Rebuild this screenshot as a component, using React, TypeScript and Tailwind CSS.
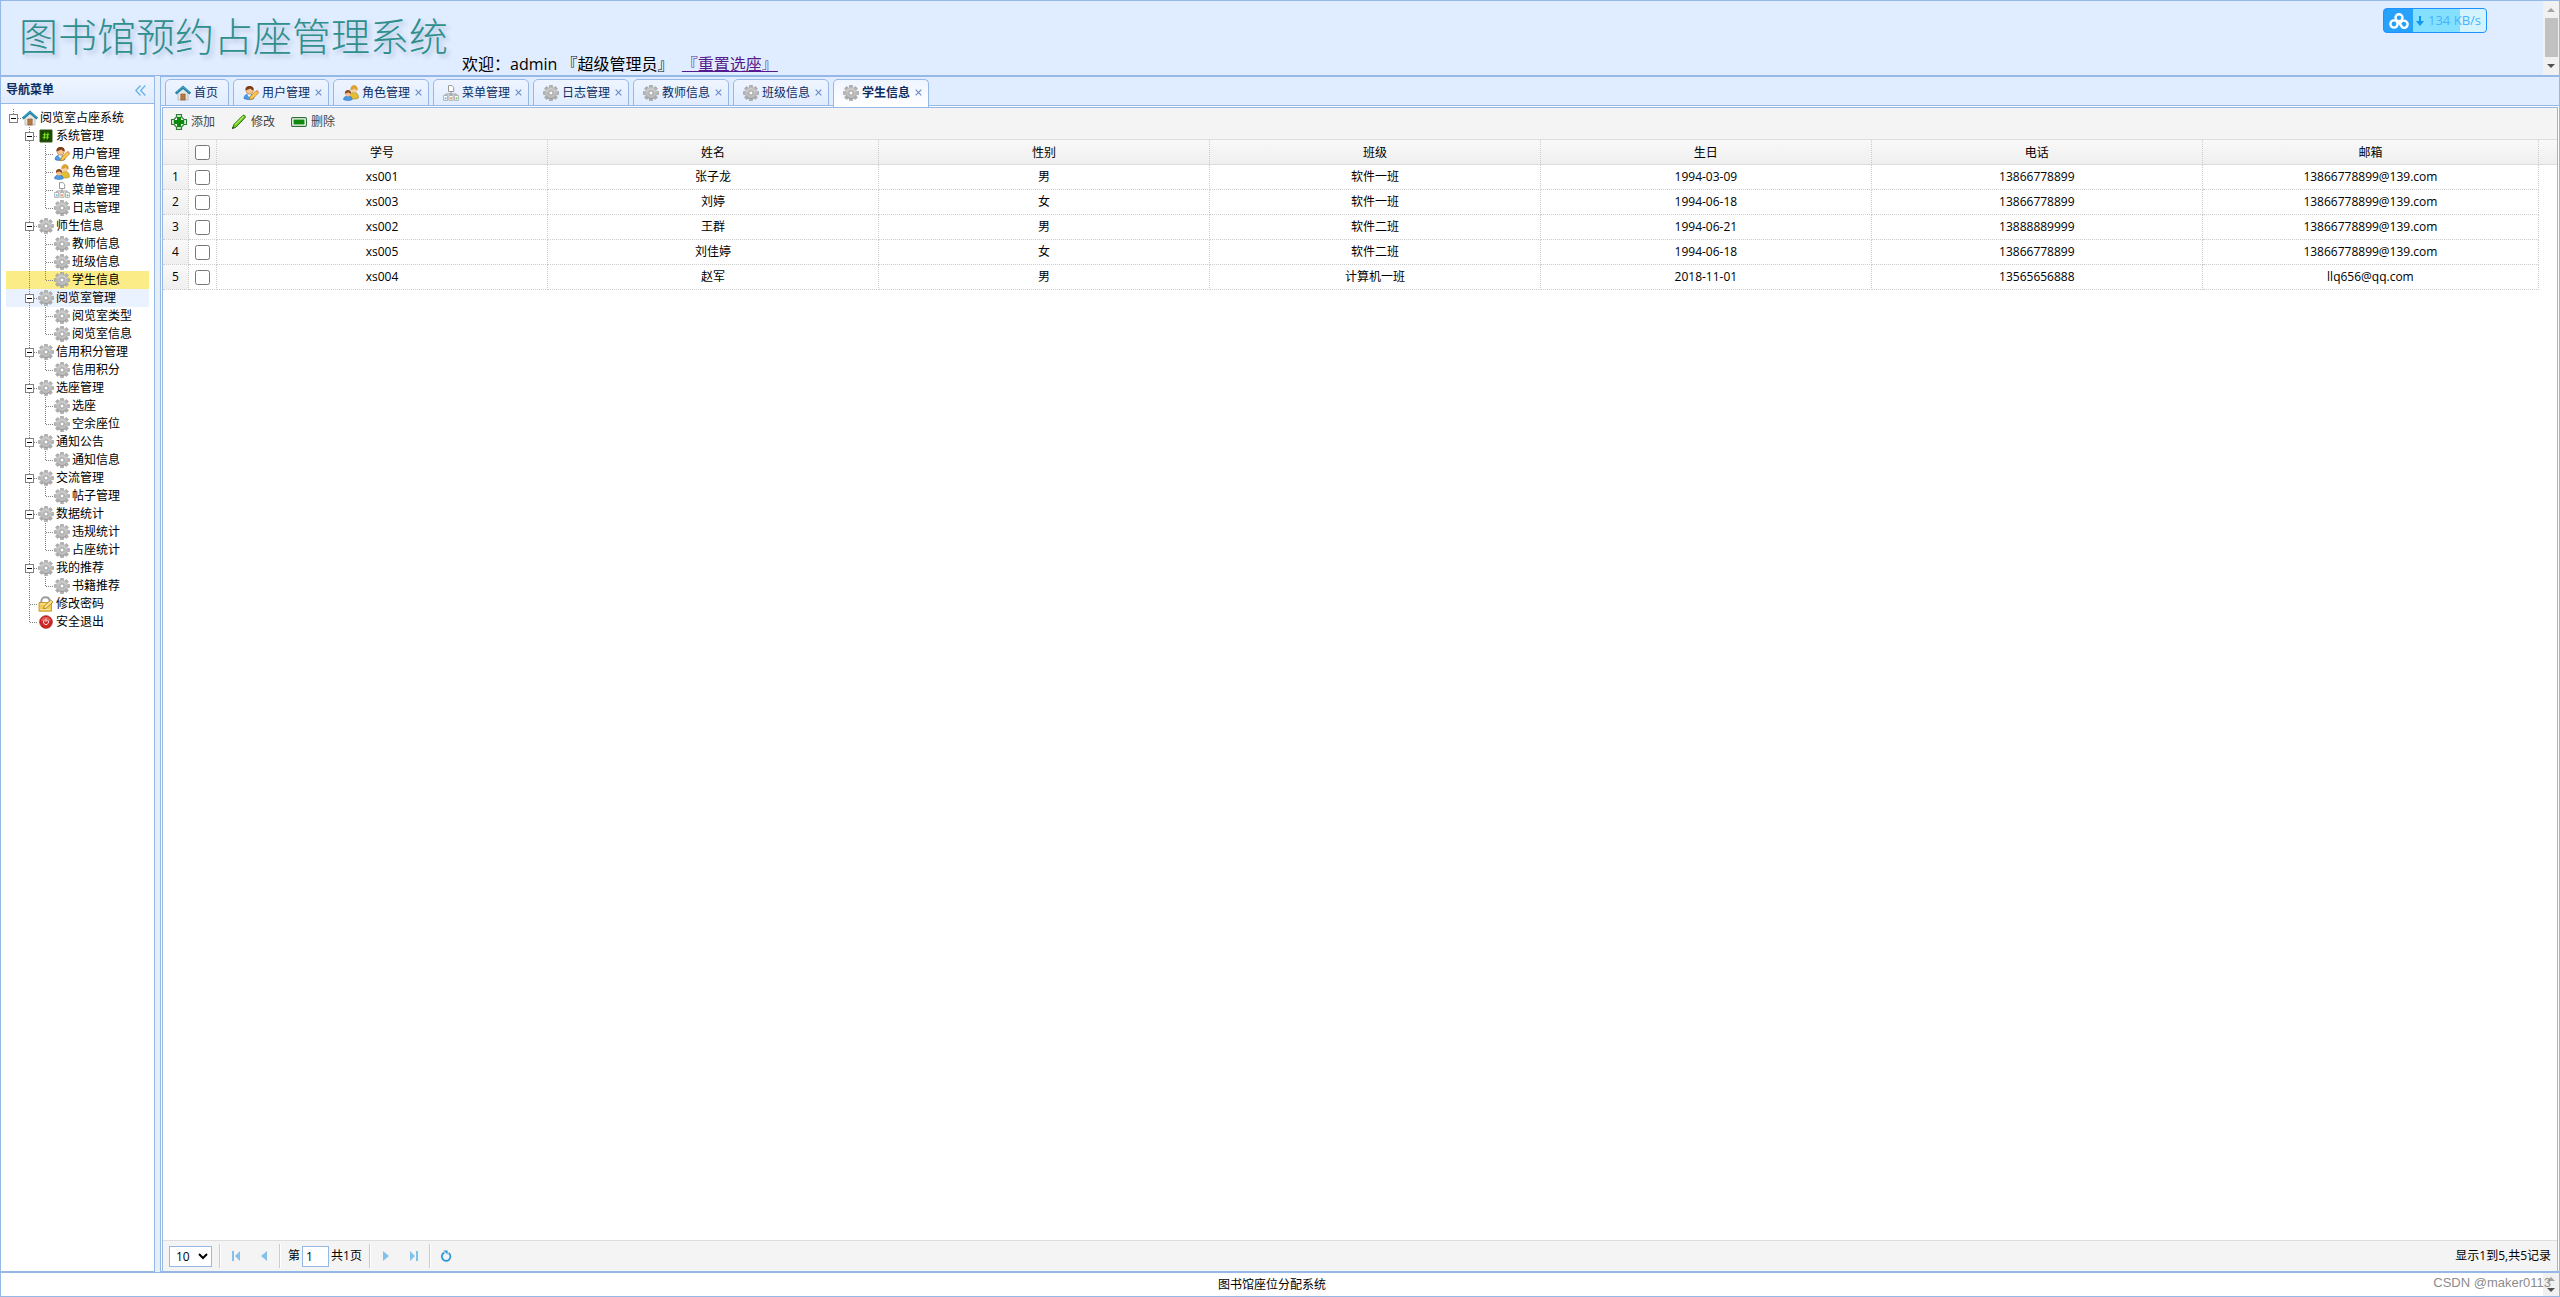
import type { ReactNode } from 'react';

type IconName = 'home' | 'sys' | 'user' | 'role' | 'menu' | 'gear' | 'lock' | 'power';
type CellKind = 'root' | 'minus' | 'line' | 'join' | 'joinBottom';

interface TreeRow {
  label: string;
  icon: IconName;
  cells: CellKind[];
  state?: 'selected' | 'hover';
}

interface Group {
  label: string;
  icon: IconName;
  children?: { label: string; icon?: IconName }[];
}

const GROUPS: Group[] = [
  {
    label: '系统管理',
    icon: 'sys',
    children: [
      { label: '用户管理', icon: 'user' },
      { label: '角色管理', icon: 'role' },
      { label: '菜单管理', icon: 'menu' },
      { label: '日志管理' },
    ],
  },
  { label: '师生信息', icon: 'gear', children: [{ label: '教师信息' }, { label: '班级信息' }, { label: '学生信息' }] },
  { label: '阅览室管理', icon: 'gear', children: [{ label: '阅览室类型' }, { label: '阅览室信息' }] },
  { label: '信用积分管理', icon: 'gear', children: [{ label: '信用积分' }] },
  { label: '选座管理', icon: 'gear', children: [{ label: '选座' }, { label: '空余座位' }] },
  { label: '通知公告', icon: 'gear', children: [{ label: '通知信息' }] },
  { label: '交流管理', icon: 'gear', children: [{ label: '帖子管理' }] },
  { label: '数据统计', icon: 'gear', children: [{ label: '违规统计' }, { label: '占座统计' }] },
  { label: '我的推荐', icon: 'gear', children: [{ label: '书籍推荐' }] },
  { label: '修改密码', icon: 'lock' },
  { label: '安全退出', icon: 'power' },
];

const TABS: { label: string; icon: IconName }[] = [
  { label: '首页', icon: 'home' },
  { label: '用户管理', icon: 'user' },
  { label: '角色管理', icon: 'role' },
  { label: '菜单管理', icon: 'menu' },
  { label: '日志管理', icon: 'gear' },
  { label: '教师信息', icon: 'gear' },
  { label: '班级信息', icon: 'gear' },
  { label: '学生信息', icon: 'gear' },
];

const ACTIVE = '学生信息';
const HOVERED = '阅览室管理';

const COLUMNS = ['学号', '姓名', '性别', '班级', '生日', '电话', '邮箱'];

const STUDENTS = [
  ['xs001', '张子龙', '男', '软件一班', '1994-03-09', '13866778899', '13866778899@139.com'],
  ['xs003', '刘婷', '女', '软件一班', '1994-06-18', '13866778899', '13866778899@139.com'],
  ['xs002', '王群', '男', '软件二班', '1994-06-21', '13888889999', '13866778899@139.com'],
  ['xs005', '刘佳婷', '女', '软件二班', '1994-06-18', '13866778899', '13866778899@139.com'],
  ['xs004', '赵军', '男', '计算机一班', '2018-11-01', '13565656888', 'llq656@qq.com'],
];

function buildRows(): TreeRow[] {
  const rows: TreeRow[] = [{ label: '阅览室占座系统', icon: 'home', cells: ['root'] }];
  GROUPS.forEach((group, i) => {
    const leaf: CellKind = i === GROUPS.length - 1 ? 'joinBottom' : 'join';
    rows.push({
      label: group.label,
      icon: group.icon,
      cells: ['line', group.children ? 'minus' : leaf],
      state: group.label === HOVERED ? 'hover' : undefined,
    });
    group.children?.forEach((child, j, all) => {
      rows.push({
        label: child.label,
        icon: child.icon ?? 'gear',
        cells: ['line', 'line', j === all.length - 1 ? 'joinBottom' : 'join'],
        state: child.label === ACTIVE ? 'selected' : undefined,
      });
    });
  });
  return rows;
}

const TREE_ROWS = buildRows();

const TOOTH_ANGLES = [0, 45, 90, 135, 180, 225, 270, 315];

const ICONS: Record<IconName, ReactNode> = {
  home: (
    <>
      <path d="M3 7.5 8 3.5l5 4V15H3z" fill="#e6e6e4" stroke="#b5b5b2" strokeWidth=".8" />
      <path d="M5.8 9h4.4v6H5.8z" fill="#b57a45" stroke="#8e5828" strokeWidth=".6" />
      <path d="M.7 8.6 8 2.3l7.3 6.3" fill="none" stroke="#1b7ea3" strokeWidth="2.6" />
      <path d="M1.4 7.4 8 1.9l6.6 5.5" fill="none" stroke="#4fb3d4" strokeWidth=".9" />
    </>
  ),
  sys: (
    <>
      <path d="M2 2h12v12H2z" fill="#1c4405" stroke="#2b5a0c" />
      <path d="M6.9 4.5 6 11.5M10 4.5l-.9 7M4.8 6.7h6.6M4.5 9.3h6.6" stroke="#7ae812" strokeWidth="1.1" fill="none" />
    </>
  ),
  user: (
    <>
      <path d="M1 13.5C.8 10.8 3 9 6 9s5 1.6 5 4.5c-1.500 1.300-8.500 1.300-10 0z" fill="#4d9be6" stroke="#2a6cb0" strokeWidth=".6" />
      <path d="m4.200 9.200 2 3 2.200-3z" fill="#fff" />
      <circle cx="6.600" cy="5.400" r="3.600" fill="#f7c48d" stroke="#a9672d" strokeWidth=".5" />
      <path d="M2.600 5.600C1.800 2.600 4 .7 6.800.9c3 .1 4.500 2.100 3.700 4.500C8.600 5.100 8 4 7.200 3.500 6 4.600 4.200 4.300 2.600 5.600z" fill="#7c3d14" />
      <path d="m6.500 14.800.6-3L13 5.700l2.500 2.200-6 6.200z" fill="#f9c64a" stroke="#bd7c15" strokeWidth=".7" />
      <path d="m13 5.700 1-.9 2 2-.6 1z" fill="#ec8f80" />
    </>
  ),
  role: (
    <>
      <path d="M6.500 12.500C6.500 9.500 8 7.500 11 7.500s4.600 2 4.400 5.500c-2 1.500-6 1.500-8.900-.5z" fill="#e3bf32" stroke="#a98512" strokeWidth=".6" />
      <circle cx="11" cy="4.500" r="3" fill="#f8cd9b" />
      <path d="M7.700 5C7.400 2 9 .5 11 .5s3.800 1.500 3.300 4.500C12.800 4.600 12.200 3.700 11.500 3c-1 1-2.500 1-3.800 2z" fill="#e2a52b" stroke="#b57d14" strokeWidth=".4" />
      <path d="M.6 14.600C.5 12.300 2.200 11 4.900 11s4.400 1.300 4.300 3.600c-2 1.200-6.600 1.200-8.600 0z" fill="#4d9be6" stroke="#2a6cb0" strokeWidth=".6" />
      <circle cx="5" cy="8.600" r="2.900" fill="#f5bf8b" />
      <path d="M1.900 8.800C1.600 6.400 3 5 5 5s3.500 1.400 3.100 3.800C6.500 8.400 6 7.700 5.300 7.200c-.9.9-2.200.8-3.400 1.600z" fill="#8b4a1d" />
    </>
  ),
  menu: (
    <>
      <path d="M8 6v3M2.800 11V9h10.400v2M8 9v2" fill="none" stroke="#8f8f8f" strokeWidth=".9" />
      <path d="M5.500.6h3.400l1.800 1.700v4.200H5.500z" fill="#fff" stroke="#8f8f8f" strokeWidth=".9" />
      <path d="M.6 10.400h4v5h-4zM6 10.400h4v5H6zM11.400 10.400h4v5h-4z" fill="#fff" stroke="#a0a0a0" strokeWidth=".8" />
      <path d="M1.800 12.300h1.700v2H1.800z" fill="#6fb3ea" />
      <path d="M7.200 12.300h1.700v2H7.200z" fill="#f0874a" />
      <path d="M12.600 12.300h1.700v2h-1.700z" fill="#63c568" />
    </>
  ),
  gear: (
    <>
      {TOOTH_ANGLES.map((a) => (
        <rect key={a} x="6.400" y=".3" width="3.200" height="4" rx=".6" fill="#b4b4b4" stroke="#8b8b8b" strokeWidth=".5" transform={`rotate(${a} 8 8)`} />
      ))}
      <circle cx="8" cy="8" r="5.700" fill="#bdbdbd" />
      <path d="M3.600 7a4.600 4.600 0 0 1 8.800 0" fill="none" stroke="#d6d6d6" strokeWidth="1" />
      <path d="M3 10.600a5.600 5.600 0 0 0 10 0" fill="none" stroke="#8f8f8f" strokeWidth=".7" />
      <circle cx="8" cy="8" r="2" fill="#fff" stroke="#979797" strokeWidth=".8" />
    </>
  ),
  lock: (
    <>
      <path d="M3.300 8V5.500C3.300 2.800 5 1.200 7.500 1.200s4.200 1.600 4.200 4.300V8" fill="none" stroke="#9b9b9b" strokeWidth="1.900" />
      <path d="M1 6.500h12.500v8.700H1z" fill="#f6cb55" stroke="#c08a1b" strokeWidth=".8" />
      <path d="M2.200 13.500h10M2.200 8h7" stroke="#fbe7a0" />
      <path d="m5.500 12.800.7-2.700 6.500-6 2.300 2-6.700 6z" fill="#fbe28c" stroke="#a87617" strokeWidth=".8" />
    </>
  ),
  power: (
    <>
      <circle cx="8" cy="8" r="6.300" fill="#cf2525" stroke="#a61717" strokeWidth=".8" />
      <path d="M3 6.500a5.300 5.300 0 0 1 10 0C10.500 7.600 5.500 7.600 3 6.500z" fill="#e4605c" />
      <path d="M6.200 6.300a2.500 2.500 0 1 0 3.600 0M8 4.600v3.200" fill="none" stroke="#fbe4e4" strokeWidth="1" />
    </>
  ),
};

function Icon({ name }: { name: IconName }) {
  return (
    <svg viewBox="0 0 16 16" className="size-4 shrink-0" aria-hidden="true">
      {ICONS[name]}
    </svg>
  );
}

const CELL_LINES: Record<CellKind, string> = {
  root: 'M7.500 0v6M12 9.500h4',
  minus: 'M7.500 0v18M12 9.500h4',
  line: 'M7.500 0v18',
  join: 'M7.500 0v18M8 9.500h8',
  joinBottom: 'M7.500 0v10M8 9.500h8',
};

function TreeCell({ kind, blank }: { kind: CellKind; blank: boolean }) {
  if (blank) return <span className="w-4 shrink-0" />;
  const box = kind === 'root' || kind === 'minus';
  return (
    <svg viewBox="0 0 16 18" className="h-[18px] w-4 shrink-0" aria-hidden="true" shapeRendering="crispEdges">
      <path d={CELL_LINES[kind]} fill="none" stroke="#808080" strokeDasharray="1 1" />
      {box && <rect x="3.500" y="5.500" width="8" height="8" fill="#fff" stroke="#808080" />}
      {box && <path d="M5 9.500h5" stroke="#000" />}
    </svg>
  );
}

const ROW_STATE = {
  selected: 'bg-[#fbec88]',
  hover: 'bg-[#eaf2ff]',
  none: '',
};

function Sidebar() {
  return (
    <aside className="flex w-[155px] shrink-0 flex-col border border-[#95b8e7] bg-white">
      <div className="flex h-[27px] shrink-0 items-center justify-between border-b border-[#95b8e7] bg-linear-to-b from-[#eff5ff] to-[#e0ecff] pr-2 pl-[5px]">
        <h2 className="font-bold text-[#0e2d5f]">导航菜单</h2>
        <button type="button" aria-label="折叠" className="flex">
          <svg viewBox="0 0 11 11" className="size-[11px]" fill="none" stroke="#67b2e8" strokeWidth="1.300">
            <path d="M5.500.5.900 5.500l4.600 5M10.300.5 5.700 5.500l4.600 5" />
          </svg>
        </button>
      </div>
      <ul className="p-[5px]">
        {TREE_ROWS.map((row) => (
          <li key={row.label}>
            <a href="#" className={`flex h-[18px] items-center whitespace-nowrap text-black ${ROW_STATE[row.state ?? 'none']}`}>
              {row.cells.map((kind, i) => (
                <TreeCell key={i} kind={kind} blank={i === 0 && kind === 'line'} />
              ))}
              <Icon name={row.icon} />
              <span className="pl-[2px]">{row.label}</span>
            </a>
          </li>
        ))}
      </ul>
    </aside>
  );
}

function TabBar() {
  return (
    <div className="flex h-[30px] shrink-0 items-start gap-1 bg-[linear-gradient(to_top,#fff_1px,#95b8e7_1px,#95b8e7_2px,#e0ecff_2px)] px-1 pt-[2px]">
      {TABS.map((tab) => {
        const active = tab.label === ACTIVE;
        const closable = tab.icon !== 'home';
        return (
          <div
            key={tab.label}
            className={`flex rounded-t-[5px] border border-[#95b8e7] bg-linear-to-b from-[#eff5ff] pl-[9px] text-[#0e2d5f] ${
              active ? 'h-[28px] border-b-0 to-white font-bold' : 'h-[27px] to-[#e0ecff]'
            } ${closable ? 'pr-[6px]' : 'pr-[10px]'}`}
          >
            <button type="button" className="flex h-[25px] items-center gap-[3px] whitespace-nowrap">
              <Icon name={tab.icon} />
              {tab.label}
            </button>
            {closable && (
              <button type="button" aria-label={`关闭${tab.label}`} className="ml-1 flex h-[25px] w-2 items-center justify-center">
                <svg viewBox="0 0 7 7" className="size-[7px]" stroke="#6a8fc8" strokeWidth="1.200">
                  <path d="m.7.7 5.600 5.600M6.300.7.700 6.300" />
                </svg>
              </button>
            )}
          </div>
        );
      })}
    </div>
  );
}

function ToolButton({ label, children }: { label: string; children: ReactNode }) {
  return (
    <button type="button" className="flex items-center gap-1 text-[#444]">
      <svg viewBox="0 0 16 16" className="size-4" aria-hidden="true">
        {children}
      </svg>
      {label}
    </button>
  );
}

function Toolbar() {
  return (
    <div className="flex h-8 shrink-0 items-center gap-4 border-b border-[#ddd] bg-[#f4f4f4] px-2 pb-[3px]">
      <ToolButton label="添加">
        <path d="M5.500.6h5v2.400l2.400 2.500h2.500v5h-2.500l-2.400 2.500v2.400h-5v-2.400l-2.400-2.500H.6v-5h2.500l2.400-2.500z" fill="#fff" stroke="#2e7d32" strokeWidth="1.200" />
        <path d="M6 2.700h4V6h3.300v4H10v3.300H6V10H2.700V6H6z" fill="#0c8a0c" />
      </ToolButton>
      <ToolButton label="修改">
        <path d="m1.500 14.500 1.300-4L12 1.300c1-.7 3 .9 2.300 2.200L5.200 13z" fill="#6cc417" stroke="#2f7d1b" />
        <path d="M4 10.800 12.500 2.500" stroke="#b7ec74" strokeWidth="1.100" />
        <path d="m1 15 .9-2.600 1.700 1.700z" fill="#20451a" />
      </ToolButton>
      <ToolButton label="删除">
        <rect x=".6" y="3.600" width="14.800" height="8.800" rx="1.200" fill="#fff" stroke="#2f6b35" strokeWidth="1.100" />
        <path d="M2.500 5.500h11v5h-11z" fill="#0c8a0c" />
      </ToolButton>
    </div>
  );
}

function StudentTable() {
  const cell = 'border-r border-b border-dotted border-[#ccc] p-0 text-center';
  const head = 'border-r border-dotted border-[#ccc] p-0 text-center font-normal';
  return (
    <div className="min-h-0 flex-1 bg-[linear-gradient(to_bottom,#f9f9f9,#efefef_24px,#ddd_24px,#ddd_25px,#fff_25px)] bg-white pr-[18px]">
      <table className="w-full table-fixed border-separate border-spacing-0 text-black">
        <colgroup>
          <col className="w-[26px]" />
          <col className="w-7" />
          {COLUMNS.map((name, i) => (
            <col key={name} className={i < COLUMNS.length - 1 ? 'w-[13.93%]' : ''} />
          ))}
        </colgroup>
        <thead>
          <tr className="h-[25px]">
            <th className={head} />
            <th className={head}>
              <input type="checkbox" aria-label="全选" className="mx-auto block size-[15px]" />
            </th>
            {COLUMNS.map((name) => (
              <th key={name} className={head}>
                {name}
              </th>
            ))}
          </tr>
        </thead>
        <tbody>
          {STUDENTS.map((student, i) => (
            <tr key={student[0]} className="h-[25px]">
              <td className={`${cell} bg-linear-to-b from-[#f9f9f9] to-[#efefef]`}>{i + 1}</td>
              <td className={cell}>
                <input type="checkbox" aria-label={student[0]} className="mx-auto block size-[15px]" />
              </td>
              {student.map((value, j) => (
                <td key={j} className={cell}>
                  {value}
                </td>
              ))}
            </tr>
          ))}
        </tbody>
      </table>
    </div>
  );
}

function Separator() {
  return <span className="mx-px h-6 w-[2px] shrink-0 border-r border-l border-r-white border-l-[#ccc]" />;
}

function PageButton({ label, d }: { label: string; d: string }) {
  return (
    <button type="button" aria-label={label} className="flex h-6 w-7 items-center justify-center">
      <svg viewBox="0 0 10 10" className="size-[10px]" fill="#84c1ea">
        <path d={d} />
      </svg>
    </button>
  );
}

function Pager() {
  return (
    <div className="flex h-[31px] shrink-0 items-center border-t border-[#ddd] bg-[#f4f4f4] px-[6px] text-black">
      <select aria-label="每页条数" className="mr-[6px] h-[21px] w-[43px] border border-[#95b8e7] bg-white pl-[2px]" defaultValue="10">
        <option>10</option>
        <option>20</option>
        <option>50</option>
      </select>
      <Separator />
      <PageButton label="第一页" d="M1 0h2v10H1zM9 0v10L4 5z" />
      <PageButton label="上一页" d="M8 0v10L2 5z" />
      <Separator />
      <label className="flex items-center gap-[2px] px-[6px]">
        第
        <input type="text" defaultValue="1" className="h-[21px] w-[27px] border border-[#95b8e7] bg-white px-[3px]" />
        共1页
      </label>
      <Separator />
      <PageButton label="下一页" d="M2 0v10l6-5z" />
      <PageButton label="最后一页" d="M7 0h2v10H7zM1 0v10l5-5z" />
      <Separator />
      <button type="button" aria-label="刷新" className="flex h-6 w-7 items-center justify-center">
        <svg viewBox="0 0 12 12" className="size-3">
          <path d="M8.600 3A4.300 4.300 0 1 1 4.400 2.600" fill="none" stroke="#2f96d8" strokeWidth="1.800" />
          <path d="M3.400.4h4.200v4.200z" fill="#2f96d8" />
        </svg>
      </button>
      <p className="ml-auto whitespace-nowrap">显示1到5,共5记录</p>
    </div>
  );
}

function Arrow({ up, muted }: { up?: boolean; muted?: boolean }) {
  return (
    <svg viewBox="0 0 8 4" className="h-1 w-2 shrink-0" fill={muted ? '#a3a3a3' : '#505050'}>
      <path d={up ? 'M4 0l4 4H0z' : 'M0 0h8L4 4z'} />
    </svg>
  );
}

function SpeedBadge() {
  return (
    <div className="absolute top-[7px] right-[72px] flex h-[25px] w-[104px] overflow-hidden rounded-[4px] border border-[#1e90ff] bg-[#26a2fd] text-[13px]">
      <span className="flex w-[29px] items-center justify-center">
        <svg viewBox="0 0 20 16" className="h-4 w-5" fill="none" stroke="#fff" strokeWidth="2.400">
          <circle cx="10" cy="4.800" r="3.500" />
          <circle cx="5" cy="11" r="3.600" />
          <path d="M11.500 10.300a3.600 3.600 0 1 1 2 4.200L9.500 9" />
        </svg>
      </span>
      <span className="flex flex-1 items-center gap-1 bg-linear-to-r from-[#84e0ff] from-65% to-[#d3f3ff] to-65% pl-[3px] whitespace-nowrap text-[#47b4fb]">
        <svg viewBox="0 0 8 10" className="h-[10px] w-2" fill="#0f98ee">
          <path d="M3 0h2v5h3L4 10 0 5h3z" />
        </svg>
        134 KB/s
      </span>
    </div>
  );
}

export default function App() {
  return (
    <div className="flex h-screen flex-col bg-[#e6eef8] font-['Open_Sans','Noto_Sans_CJK_SC',sans-serif] text-xs">
      <header className="relative flex h-[76px] shrink-0 border border-[#95b8e7] bg-[#e0ecff]">
        <h1 className="pt-[14px] pl-[18px] text-[39px] leading-[42px] font-light whitespace-nowrap text-[#2f8f8c] [text-shadow:3px_3px_4px_#b4c4dc]">
          图书馆预约占座管理系统
        </h1>
        <p className="flex-1 self-end pl-[14px] text-base leading-[22px] whitespace-pre text-black">
          欢迎：admin 『超级管理员』{'  '}
          <a href="#" className="text-[#551a8b] underline">
            『重置选座』
          </a>
        </p>
        <div className="flex w-4 flex-col items-center justify-between bg-[#f1f1f1] py-[7px]">
          <Arrow up muted />
          <span className="mt-[6px] mb-auto h-[39px] w-[13px] bg-[#c1c1c1]" />
          <Arrow />
        </div>
        <SpeedBadge />
      </header>

      <div className="flex min-h-0 flex-1 gap-[5px]">
        <Sidebar />
        <main className="flex min-w-0 flex-1 flex-col border border-[#95b8e7] bg-white">
          <TabBar />
          <section className="mx-px flex min-h-0 flex-1 flex-col border border-b-0 border-[#95b8e7]">
            <Toolbar />
            <StudentTable />
            <Pager />
          </section>
        </main>
      </div>

      <footer className="relative flex h-[25px] shrink-0 border border-[#95b8e7] bg-white">
        <p className="flex-1 self-center text-center text-black">图书馆座位分配系统</p>
        <div className="flex w-4 flex-col items-center justify-between bg-[#f1f1f1] py-1">
          <Arrow up muted />
          <Arrow />
        </div>
        <span className="absolute right-2 bottom-[5px] font-['Liberation_Sans',sans-serif] text-[13px] leading-4 text-[#8c8c8c]">CSDN @maker0113</span>
      </footer>
    </div>
  );
}
